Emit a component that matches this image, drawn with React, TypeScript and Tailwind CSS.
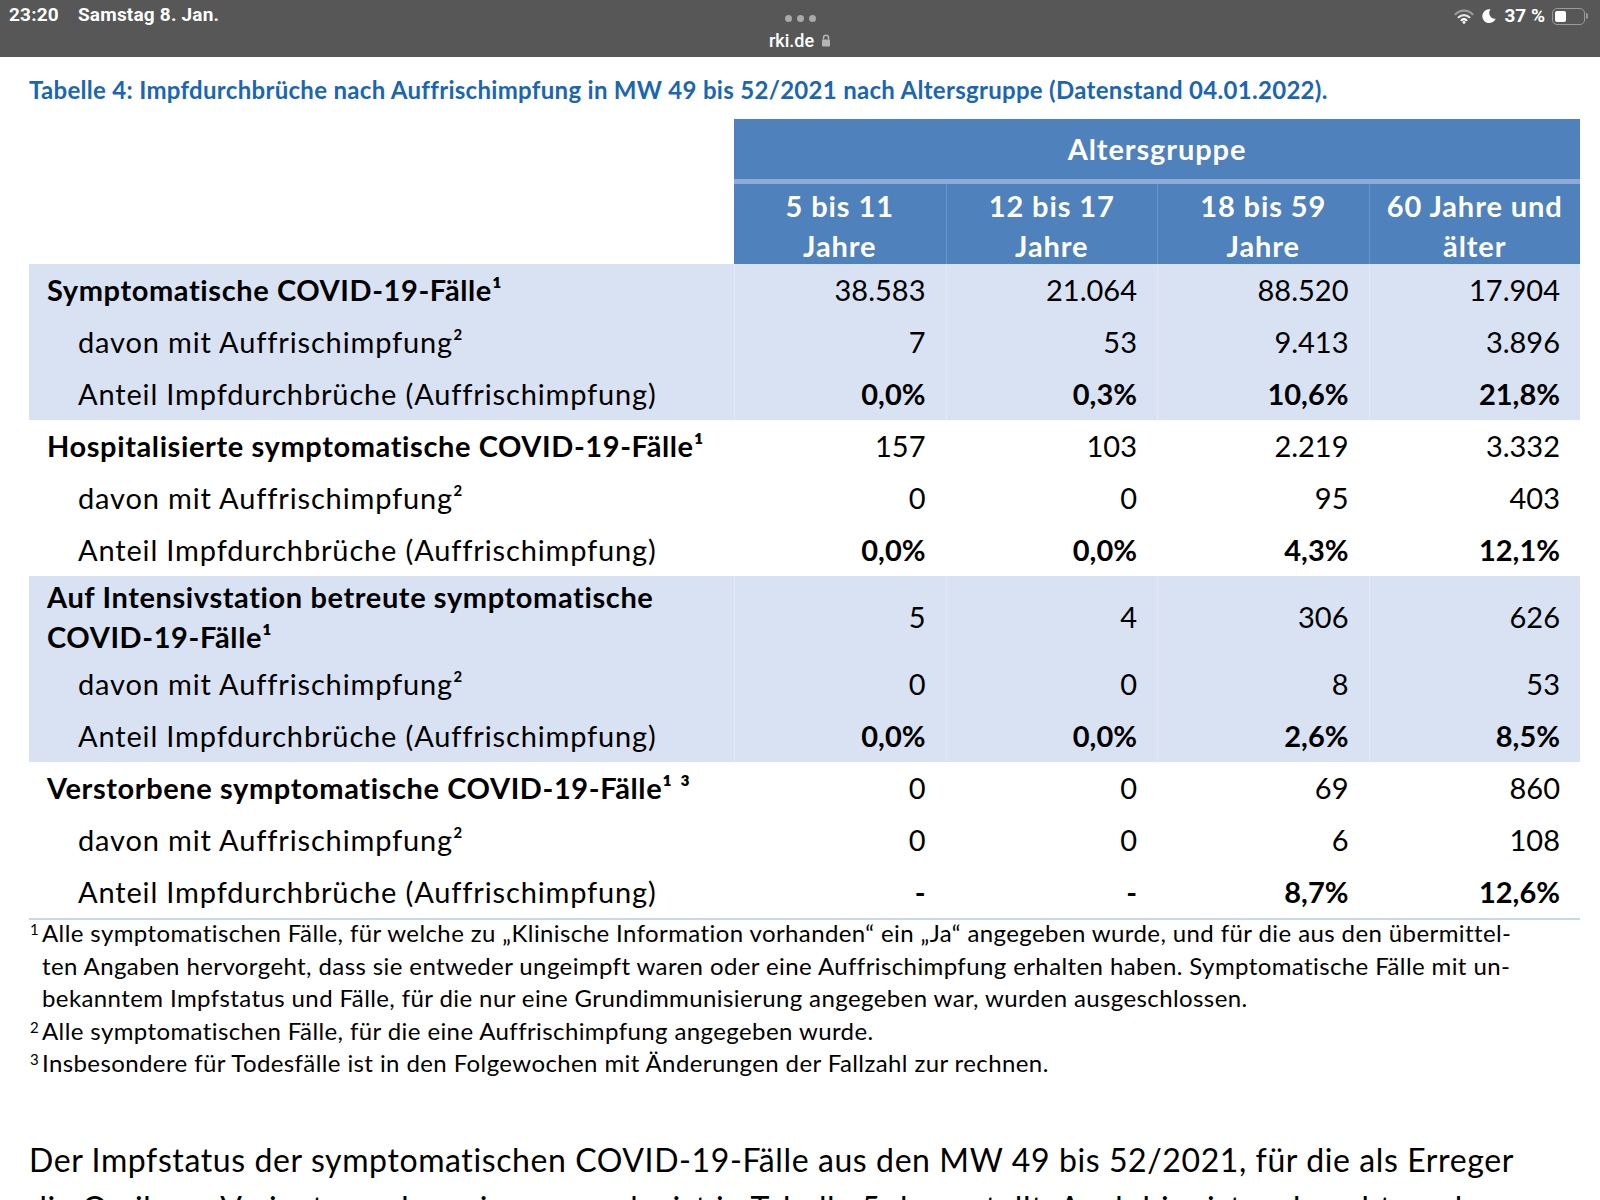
import React from "react";

type Row = {
  label: React.ReactNode;
  values: string[];
  kind: "head" | "sub" | "pct";
  h?: string;
};

type Group = { band: boolean; rows: Row[] };

const groups: Group[] = [
  {
    band: true,
    rows: [
      { label: <>Symptomatische COVID-19-Fälle¹</>, values: ["38.583", "21.064", "88.520", "17.904"], kind: "head" },
      { label: <>davon mit Auffrischimpfung²</>, values: ["7", "53", "9.413", "3.896"], kind: "sub" },
      { label: <>Anteil Impfdurchbrüche (Auffrischimpfung)</>, values: ["0,0%", "0,3%", "10,6%", "21,8%"], kind: "pct" },
    ],
  },
  {
    band: false,
    rows: [
      { label: <>Hospitalisierte symptomatische COVID-19-Fälle¹</>, values: ["157", "103", "2.219", "3.332"], kind: "head" },
      { label: <>davon mit Auffrischimpfung²</>, values: ["0", "0", "95", "403"], kind: "sub" },
      { label: <>Anteil Impfdurchbrüche (Auffrischimpfung)</>, values: ["0,0%", "0,0%", "4,3%", "12,1%"], kind: "pct" },
    ],
  },
  {
    band: true,
    rows: [
      {
        label: (
          <>
            Auf Intensivstation betreute symptomatische
            <br />
            COVID-19-Fälle¹
          </>
        ),
        values: ["5", "4", "306", "626"],
        kind: "head",
        h: "h-[82px]",
      },
      { label: <>davon mit Auffrischimpfung²</>, values: ["0", "0", "8", "53"], kind: "sub" },
      { label: <>Anteil Impfdurchbrüche (Auffrischimpfung)</>, values: ["0,0%", "0,0%", "2,6%", "8,5%"], kind: "pct" },
    ],
  },
  {
    band: false,
    rows: [
      { label: <>Verstorbene symptomatische COVID-19-Fälle¹ ³</>, values: ["0", "0", "69", "860"], kind: "head" },
      { label: <>davon mit Auffrischimpfung²</>, values: ["0", "0", "6", "108"], kind: "sub" },
      { label: <>Anteil Impfdurchbrüche (Auffrischimpfung)</>, values: ["-", "-", "8,7%", "12,6%"], kind: "pct" },
    ],
  },
];

const ages = [
  ["5 bis 11", "Jahre"],
  ["12 bis 17", "Jahre"],
  ["18 bis 59", "Jahre"],
  ["60 Jahre und", "älter"],
];

function StatusBar() {
  return (
    <div className="relative h-[57px] bg-[#575757] font-['Roboto',sans-serif] text-white">
      <div className="flex items-center gap-[19px] pl-[9px] pt-[1px] text-[19px] font-bold tracking-[0.2px]">
        <span>23:20</span>
        <span>Samstag 8. Jan.</span>
      </div>
      <div className="absolute left-0 right-0 top-[15px] flex justify-center gap-[5px]">
        <span className="h-[7px] w-[7px] rounded-full bg-[#a9a9a9]" />
        <span className="h-[7px] w-[7px] rounded-full bg-[#a9a9a9]" />
        <span className="h-[7px] w-[7px] rounded-full bg-[#a9a9a9]" />
      </div>
      <div className="absolute left-0 right-0 top-[27px] flex items-center justify-center gap-[7px] text-[18px] font-medium">
        <span>rki.de</span>
        <svg width="10" height="13" viewBox="0 0 10 13">
          <path d="M2.5 5.5V3.8a2.5 2.5 0 0 1 5 0v1.7" stroke="#b5b5b5" strokeWidth="1.5" fill="none" />
          <rect x="1" y="5.5" width="8" height="7" rx="1" fill="#b5b5b5" />
        </svg>
      </div>
      <div className="absolute right-[12px] top-[2px] flex items-center gap-[7px] text-[19px] font-bold">
        <svg width="20" height="15" viewBox="0 0 20 15">
          <path d="M1.5 5.2a12 12 0 0 1 17 0" stroke="#9c9c9c" strokeWidth="2.2" fill="none" strokeLinecap="round" />
          <path d="M4.6 8.3a7.6 7.6 0 0 1 10.8 0" stroke="#e6e6e6" strokeWidth="2.2" fill="none" strokeLinecap="round" />
          <path d="M7.6 11.2a3.4 3.4 0 0 1 4.8 0" stroke="#ffffff" strokeWidth="2.2" fill="none" strokeLinecap="round" />
          <circle cx="10" cy="13.4" r="1.4" fill="#ffffff" />
        </svg>
        <svg width="16" height="16" viewBox="0 0 15 15">
          <path d="M9 1.2A6.5 6.5 0 1 0 13.8 10 5.4 5.4 0 0 1 9 1.2Z" fill="#ffffff" />
        </svg>
        <span>37 %</span>
        <div className="flex items-center">
          <div className="flex h-[17px] w-[33px] items-center rounded-[5px] border-[1.5px] border-[#9a9a9a] p-[2px]">
            <div className="h-full w-[11px] rounded-[2px] bg-white" />
          </div>
          <div className="ml-[1px] h-[6px] w-[2px] rounded-r-[2px] bg-[#9a9a9a]" />
        </div>
      </div>
    </div>
  );
}

function Table() {
  return (
    <div className="mt-[14px] font-['Lato',sans-serif] text-black">
      {/* header */}
      <div className="grid grid-cols-[705px_repeat(4,minmax(0,1fr))]">
        <div />
        <div className="col-span-4 bg-[#4f81bd] text-white">
          <div className="flex h-[60px] items-center justify-center text-[29px] font-bold tracking-[0.9px]">
            Altersgruppe
          </div>
          <div className="h-[5px] bg-[#8eaadb]" />
          <div className="grid h-[80px] grid-cols-4">
            {ages.map((a, i) => (
              <div
                key={i}
                className={`flex flex-col items-center justify-center pt-[2px] text-[29px] leading-[40px] font-bold tracking-[0.9px] ${
                  i > 0 ? "border-l border-[#6b95c9]" : ""
                }`}
              >
                <span>{a[0]}</span>
                <span>{a[1]}</span>
              </div>
            ))}
          </div>
        </div>
      </div>

      {/* body */}
      {groups.map((g, gi) => (
        <div key={gi} className={g.band ? "bg-[#d9e2f3]" : "bg-white"}>
          {g.rows.map((r, ri) => (
            <div
              key={ri}
              className={`grid grid-cols-[705px_repeat(4,minmax(0,1fr))] ${r.h ?? "h-[52px]"}`}
            >
              <div
                className={`flex items-center whitespace-nowrap text-[29px] leading-[40px] ${
                  r.kind === "head" ? "pl-[18px] font-bold tracking-[0.6px]" : "pl-[49px] tracking-[0.85px]"
                }`}
              >
                <span>{r.label}</span>
              </div>
              {r.values.map((v, vi) => (
                <div
                  key={vi}
                  className={`flex items-center justify-end pr-[20px] text-[29px] ${
                    r.kind === "pct" ? "font-bold" : ""
                  } ${g.band ? "border-l border-[#e2e8f5]" : ""}`}
                >
                  {v}
                </div>
              ))}
            </div>
          ))}
        </div>
      ))}
      <div className="h-[2px] bg-[#c9d6ee]" />
    </div>
  );
}

function Footnotes() {
  return (
    <div className="-mt-[3px] font-['Lato',sans-serif] text-[24px] leading-[32.5px] tracking-[0.4px] text-black">
      <div className="flex">
        <span className="w-[13px] pl-[1px] text-[15px] leading-[24px]">1</span>
        <div className="whitespace-nowrap">
          <div>
            Alle symptomatischen Fälle, für welche zu „Klinische Information vorhanden“ ein „Ja“ angegeben wurde, und
            für die aus den übermittel-
          </div>
          <div>
            ten Angaben hervorgeht, dass sie entweder ungeimpft waren oder eine Auffrischimpfung erhalten haben.
            Symptomatische Fälle mit un-
          </div>
          <div>bekanntem Impfstatus und Fälle, für die nur eine Grundimmunisierung angegeben war, wurden ausgeschlossen.</div>
        </div>
      </div>
      <div className="flex">
        <span className="w-[13px] pl-[1px] text-[15px] leading-[24px]">2</span>
        <div className="whitespace-nowrap">Alle symptomatischen Fälle, für die eine Auffrischimpfung angegeben wurde.</div>
      </div>
      <div className="flex">
        <span className="w-[13px] pl-[1px] text-[15px] leading-[24px]">3</span>
        <div className="whitespace-nowrap">
          Insbesondere für Todesfälle ist in den Folgewochen mit Änderungen der Fallzahl zur rechnen.
        </div>
      </div>
    </div>
  );
}

export default function App() {
  return (
    <div className="h-[1200px] w-[1600px] overflow-hidden bg-white">
      <StatusBar />
      <div className="pl-[29px] pr-[20px]">
        <h1 className="mt-[18px] h-[30px] font-['Lato',sans-serif] text-[24px] leading-[30px] font-bold tracking-[0.3px] whitespace-nowrap text-[#1a66b2]">
          Tabelle 4: Impfdurchbrüche nach Auffrischimpfung in MW 49 bis 52/2021 nach Altersgruppe (Datenstand
          04.01.2022).
        </h1>
        <Table />
        <Footnotes />
        <p className="mt-[56px] whitespace-nowrap font-['Lato',sans-serif] text-[32px] leading-[48px] tracking-[0.6px] text-black">
          Der Impfstatus der symptomatischen COVID-19-Fälle aus den MW 49 bis 52/2021, für die als Erreger
          <br />
          die Omikron-Variante nachgewiesen wurde, ist in Tabelle 5 dargestellt. Auch hier ist zu beachten, dass
        </p>
      </div>
    </div>
  );
}
